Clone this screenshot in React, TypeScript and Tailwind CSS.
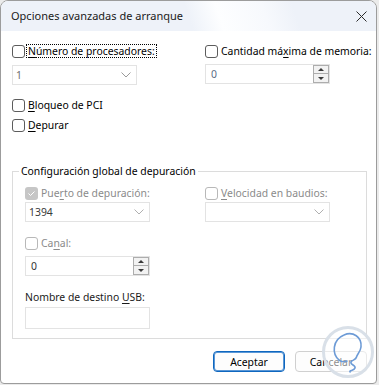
import React from "react";

const font = "font-['Noto_Sans',sans-serif]";

type BoxState = "off" | "disOff" | "disOn";

function Box({ state = "off" }: { state?: BoxState }) {
  if (state === "disOn")
    return (
      <span className="flex h-[13px] w-[13px] shrink-0 items-center justify-center rounded-[3px] bg-[#c6c6c6]">
        <svg width="9" height="7" viewBox="0 0 9 7">
          <path d="M1.5 3.5 L3.5 5.5 L7.5 1.5" fill="none" stroke="#ffffff" strokeWidth="1" />
        </svg>
      </span>
    );
  return (
    <span
      className={`h-[13px] w-[13px] shrink-0 rounded-[3px] border bg-white ${
        state === "off" ? "border-[#5c5c5c]" : "border-[#b8b8b8]"
      }`}
    />
  );
}

function U({ children }: { children: React.ReactNode }) {
  return <span className="underline decoration-1 underline-offset-2">{children}</span>;
}

function Row({ children }: { children: React.ReactNode }) {
  return <div className="flex h-[14px] items-center whitespace-nowrap leading-[14px]">{children}</div>;
}

function Chevron({ color }: { color: string }) {
  return (
    <svg width="10" height="6" viewBox="0 0 10 6">
      <path d="M0.5 0.5 L5 5 L9.5 0.5" fill="none" stroke={color} strokeWidth="1" />
    </svg>
  );
}

function Combo({ value, textClass, chevron }: { value?: string; textClass?: string; chevron: string }) {
  return (
    <div className="flex h-[20px] w-[125px] items-center justify-between border border-[#e3e3e3] bg-white pl-[3px] pr-[5px]">
      <span className={`leading-[14px] ${textClass ?? ""}`}>{value ?? ""}</span>
      <Chevron color={chevron} />
    </div>
  );
}

function Spin({ textClass }: { textClass: string }) {
  return (
    <div className="flex h-[20px] w-[125px] border border-[#e3e3e3] bg-white">
      <span className={`flex flex-1 items-center pl-[5px] leading-[14px] ${textClass}`}>0</span>
      <div className="flex w-[16px] flex-col">
        <div className="flex h-[9px] items-center justify-center border border-[#adadad] bg-[#f2f2f2]">
          <svg width="6" height="3" viewBox="0 0 6 3">
            <path d="M0 3 L3 0 L6 3 Z" fill="#3a3a3a" />
          </svg>
        </div>
        <div className="flex h-[9px] items-center justify-center border border-t-0 border-[#adadad] bg-[#f2f2f2]">
          <svg width="6" height="3" viewBox="0 0 6 3">
            <path d="M0 0 L6 0 L3 3 Z" fill="#3a3a3a" />
          </svg>
        </div>
      </div>
    </div>
  );
}

function Watermark() {
  return (
    <svg
      className="pointer-events-none absolute left-[320px] top-[323px]"
      width="58"
      height="58"
      viewBox="0 0 58 58"
    >
      <circle cx="28" cy="29" r="24.5" fill="rgba(255,255,255,0.55)" stroke="#d9e0e8" strokeWidth="3" />
      <path
        d="M19 37 C12 31 12 17 24 12 C33 8 42 14 41 24 C40.5 29 37 31 36.5 34 C36 37 32 37 31 39 C30 42 36 42 35 45 C34 48 29 47 30 49"
        fill="none"
        stroke="#6d9bd6"
        strokeWidth="1.6"
        strokeLinecap="round"
      />
      <path
        d="M19 37 C21 39 24 39 27 38"
        fill="none"
        stroke="#6d9bd6"
        strokeWidth="1.6"
        strokeLinecap="round"
      />
    </svg>
  );
}

export default function App() {
  return (
    <div className={`relative h-[385px] w-[379px] bg-[#ebebeb] text-[10.4px] text-black ${font}`}>
      <div className="flex h-[384px] w-[377px] flex-col overflow-hidden rounded-t-[8px] rounded-b-[4px] border border-[#9c9c9c] bg-white">
        <div className="flex h-[30px] shrink-0 items-center justify-between bg-[linear-gradient(72deg,#eef2f9_0%,#eef2f9_50%,#fdfeff_58%,#f7f9fd_70%,#eef2f9_78%,#eef2f9_100%)] pl-[10px] pr-[9px]">
          <span className="text-[11px] leading-[16px] text-[#1a1a1a]">Opciones avanzadas de arranque</span>
          <svg width="11" height="11" viewBox="0 0 11 11">
            <path d="M0.5 0.5 L10.5 10.5 M10.5 0.5 L0.5 10.5" stroke="#2b2b2b" strokeWidth="1" />
          </svg>
        </div>

        <div className="flex flex-1 flex-col pl-[11px] pr-[9px]">
          <div className="mt-[13px] grid grid-cols-[193px_1fr]">
            <div className="flex flex-col">
              <Row>
                <Box />
                <span className="ml-[1px] border border-dotted border-black px-[1px] leading-[12px]">
                  <U>N</U>úmero de procesadores:
                </span>
              </Row>
              <div className="mt-[7px]">
                <Combo value="1" textClass="text-[#6e6e6e]" chevron="#9a9a9a" />
              </div>
            </div>
            <div className="flex flex-col">
              <Row>
                <Box />
                <span className="ml-[3px]">
                  Cantidad má<U>x</U>ima de memoria:
                </span>
              </Row>
              <div className="mt-[6px]">
                <Spin textClass="text-[#5b6b85]" />
              </div>
            </div>
          </div>

          <div className="mt-[13px]">
            <Row>
              <Box />
              <span className="ml-[3px]">
                <U>B</U>loqueo de PCI
              </span>
            </Row>
          </div>
          <div className="mt-[6px]">
            <Row>
              <Box />
              <span className="ml-[3px]">
                <U>D</U>epurar
              </span>
            </Row>
          </div>

          <fieldset className="mt-[31px] w-[355px] border border-[#dcdcdc] p-0 pb-[9px]">
            <legend className="ml-[6px] px-[2px] leading-[16px]">Configuración global de depuración</legend>
            <div className="grid grid-cols-[180px_1fr] items-start pl-[12px]">
              <div className="flex flex-col">
                <div className="mt-[7px]">
                  <Row>
                    <Box state="disOn" />
                    <span className="ml-[3px] text-[#8a8a8a]">
                      Pue<U>r</U>to de depuración:
                    </span>
                  </Row>
                </div>
                <div className="mt-[2px]">
                  <Combo value="1394" textClass="text-[#3a3a3a]" chevron="#b0b0b0" />
                </div>
                <div className="mt-[14px]">
                  <Row>
                    <Box state="disOff" />
                    <span className="ml-[3px] text-[#8a8a8a]">
                      Ca<U>n</U>al:
                    </span>
                  </Row>
                </div>
                <div className="mt-[6px]">
                  <Spin textClass="text-[#333333]" />
                </div>
                <div className="mt-[14px]">
                  <Row>
                    <span className="text-[#1a1a1a]">
                      Nombre de destino <U>U</U>SB:
                    </span>
                  </Row>
                </div>
                <div className="mt-[3px] h-[22px] w-[125px] border border-[#e3e3e3] bg-white" />
              </div>
              <div className="flex flex-col">
                <div className="mt-[7px]">
                  <Row>
                    <Box state="disOff" />
                    <span className="ml-[3px] text-[#8a8a8a]">
                      <U>V</U>elocidad en baudios:
                    </span>
                  </Row>
                </div>
                <div className="mt-[2px]">
                  <Combo chevron="#b0b0b0" />
                </div>
              </div>
            </div>
          </fieldset>

          <div className="mt-[12px] flex justify-end gap-[10px]">
            <button className="flex h-[21px] w-[72px] items-center justify-center rounded-[4px] border border-[#0f67bf] bg-[#fdfdfd] leading-[14px] text-black shadow-[inset_0_0_0_1px_#5a97d6]">
              Aceptar
            </button>
            <button className="flex h-[21px] w-[72px] items-center justify-center rounded-[4px] border border-[#d0d0d0] bg-[#fdfdfd] leading-[14px] text-black">
              Cancelar
            </button>
          </div>
        </div>
      </div>
      <Watermark />
    </div>
  );
}
